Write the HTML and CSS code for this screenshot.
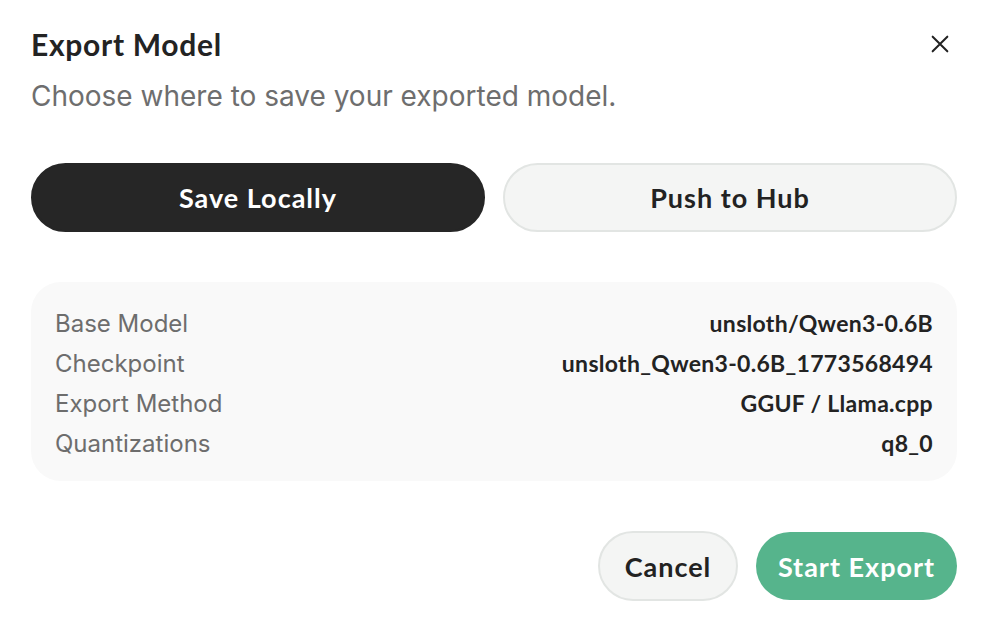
FILE: index.html
```html
<!DOCTYPE html>
<html>
<head>
<meta charset="utf-8">
<link rel="stylesheet" href="styles.css">
</head>
<body>
<div class="dialog">
  <div class="header">
    <h1 class="title">Export Model</h1>
    <button class="close" aria-label="Close">
      <svg width="22" height="22" viewBox="0 0 24 24" fill="none" stroke="#222" stroke-width="2.2" stroke-linecap="round"><path d="M4 4L20 20M20 4L4 20"/></svg>
    </button>
  </div>
  <p class="subtitle">Choose where to save your exported model.</p>
  <div class="tabs">
    <button class="tab active">Save Locally</button>
    <button class="tab">Push to Hub</button>
  </div>
  <div class="info">
    <div class="row"><span class="label">Base Model</span><span class="value">unsloth/Qwen3-0.6B</span></div>
    <div class="row"><span class="label">Checkpoint</span><span class="value">unsloth_Qwen3-0.6B_1773568494</span></div>
    <div class="row"><span class="label">Export Method</span><span class="value">GGUF / Llama.cpp</span></div>
    <div class="row"><span class="label">Quantizations</span><span class="value">q8_0</span></div>
  </div>
  <div class="footer">
    <button class="btn cancel">Cancel</button>
    <button class="btn primary">Start Export</button>
  </div>
</div>
</body>
</html>
```
FILE: styles.css
```css
* { box-sizing: border-box; }
html, body { margin: 0; padding: 0; background: #fff; }
body { font-family: Inter, "Liberation Sans", sans-serif; color: #222; }
.dialog { padding: 24px 31px 0 31px; display: flex; flex-direction: column; }
.header { display: flex; justify-content: space-between; align-items: center; height: 40px; }
.title { margin: 0; font-family: Lato, sans-serif; font-weight: 700; font-size: 30px; letter-spacing: 0.7px; color: #232323; }
.close { background: none; border: 0; padding: 0; margin-right: 6px; display: flex; }
.subtitle { margin: 15px 0 0 0; font-size: 28px; color: #6e6e6e; line-height: 34px; }
.tabs { display: flex; gap: 18px; margin-top: 50px; }
.tab { flex: 1; height: 69px; border-radius: 999px; border: 2px solid #e2e5e3; background: #f4f5f4; font-family: Lato, sans-serif; font-weight: 700; font-size: 27px; letter-spacing: 1px; color: #222; }
.tab.active { background: #262626; border-color: #262626; color: #fff; }
.info { margin-top: 50px; background: #f9f9f9; border-radius: 30px; padding: 21px 24px 18px; display: flex; flex-direction: column; }
.row { display: flex; justify-content: space-between; align-items: center; height: 40px; }
.label { font-size: 24px; color: #6d6d6d; }
.value { font-family: Lato, sans-serif; font-weight: 700; font-size: 23px; letter-spacing: 0.3px; color: #232323; }
.footer { display: flex; justify-content: flex-end; gap: 18px; margin-top: 50px; }
.btn { height: 70px; border-radius: 999px; font-family: Lato, sans-serif; font-weight: 700; font-size: 27px; letter-spacing: 1px; padding: 0 20px; }
.cancel { background: #f4f5f4; border: 2px solid #e2e5e3; color: #222; width: 140px; }
.primary { background: #56b48c; border: 0; color: #fff; width: 201px; height: 68px; margin-top: 1px; }
```
